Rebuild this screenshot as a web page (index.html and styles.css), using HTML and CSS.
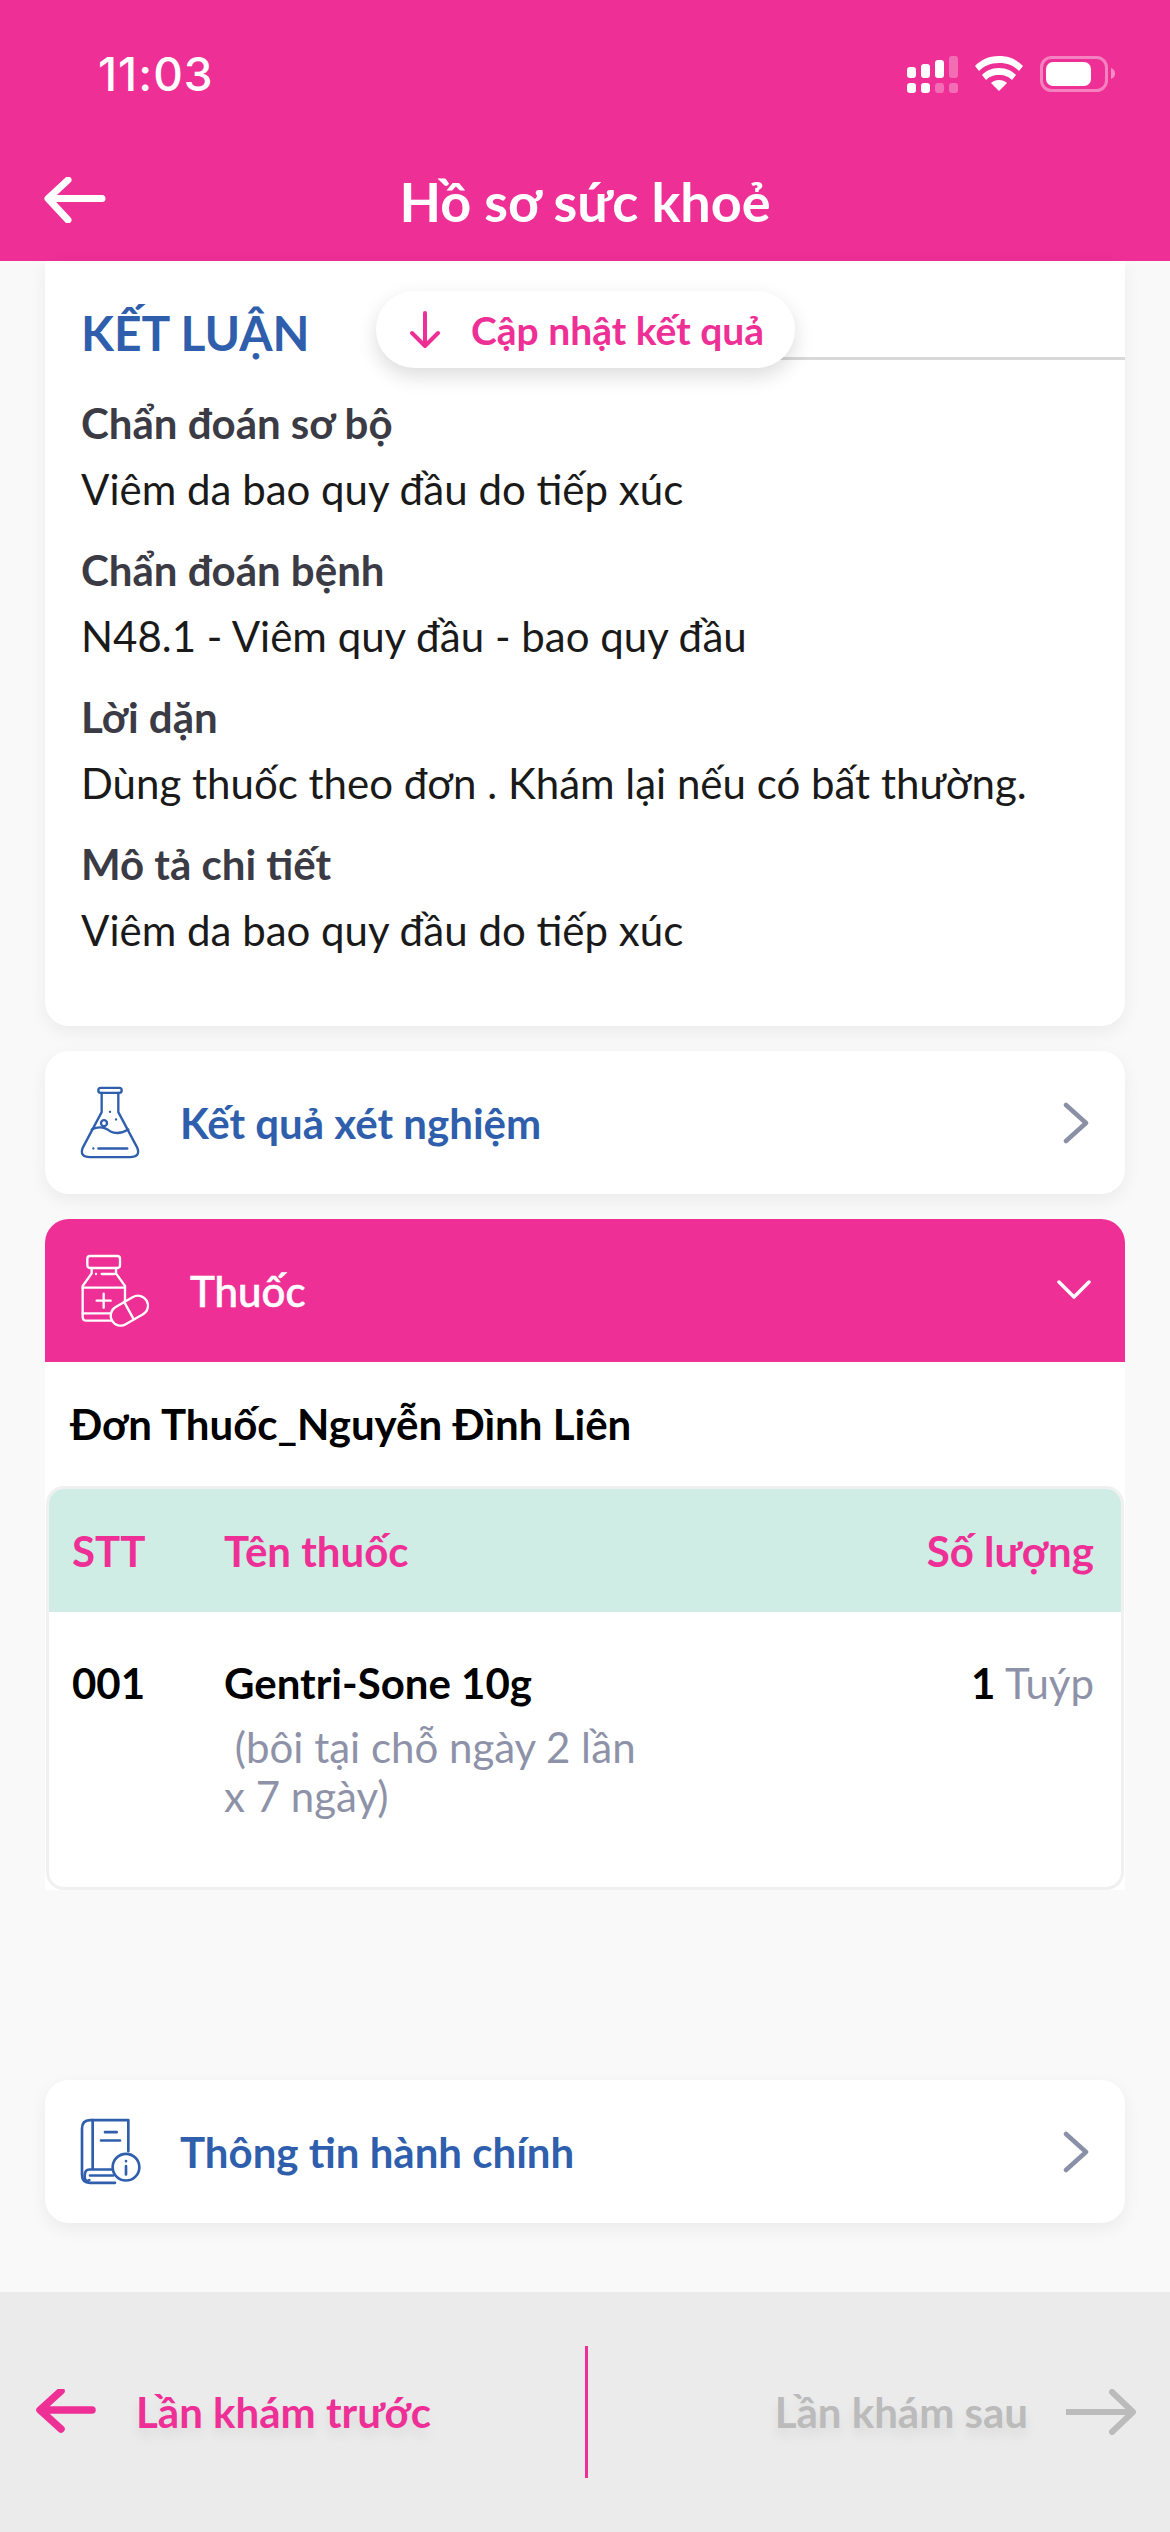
FILE: index.html
```html
<!DOCTYPE html>
<html lang="vi">
<head>
    <meta charset="UTF-8">
    <meta name="viewport" content="width=device-width, initial-scale=1.0">
    <title>Hồ sơ sức khoẻ</title>
    <link rel="stylesheet" href="styles.css">
</head>
<body>

<div class="screen">

    <!-- Header -->
    <header class="topbar">
        <div class="status">
            <span class="clock">11:03</span>
            <svg class="status-icons" viewBox="907 56 208 37" width="208" height="37">
                <g fill="#fff">
                    <rect x="907" y="67" width="9" height="11" rx="3"/>
                    <rect x="921" y="64" width="9" height="14" rx="3"/>
                    <rect x="935" y="60" width="9" height="18" rx="3"/>
                    <rect x="907" y="83" width="9" height="10" rx="3"/>
                    <rect x="921" y="83" width="9" height="10" rx="3"/>
                    <rect x="949" y="56" width="9" height="22" rx="3" opacity=".3"/>
                    <rect x="935" y="83" width="9" height="10" rx="3" opacity=".3"/>
                    <rect x="949" y="83" width="9" height="10" rx="3" opacity=".3"/>
                    <path d="M999 91l-8-8c4-4 12-4 16 0z"/>
                    <path d="M999 68c-8 0-13 3-17 7l4 5c3-3 7-5 13-5s10 2 13 5l4-5c-4-4-9-7-17-7z"/>
                    <path d="M999 56c-11 0-18 4-24 10l4 5c5-5 11-8 20-8s15 3 20 8l4-5c-6-6-13-10-24-10z"/>
                    <rect x="1046" y="62" width="45" height="24" rx="7"/>
                    <path d="M1111 68c3 1 4 3 4 5.500s-1 4.500-4 5.500z" opacity=".45"/>
                </g>
                <rect x="1041.500" y="57.500" width="65" height="33" rx="10" fill="none" stroke="#fff" stroke-width="3" opacity=".4"/>
            </svg>
        </div>
        <div class="nav">
            <svg class="nav-back" viewBox="0 0 64 46" width="64" height="46">
                <path d="M58 21.500H5M24 3L4 21.500 24 43" fill="none" stroke="#fff" stroke-width="7" stroke-linecap="round" stroke-linejoin="round"/>
            </svg>
            <h1 class="nav-title">Hồ sơ sức khoẻ</h1>
        </div>
    </header>

    <main class="content">

        <!-- Conclusion -->
        <section class="card conclusion">
            <div class="conclusion-head">
                <h2 class="conclusion-title">KẾT LUẬN</h2>
                <div class="update-pill">
                    <svg viewBox="0 0 30 38" width="30" height="38">
                        <path d="M15 2V35M2 22L15 35 28 22" fill="none" stroke="#ee2f96" stroke-width="4" stroke-linecap="round" stroke-linejoin="round"/>
                    </svg>
                    <span>Cập nhật kết quả</span>
                </div>
                <div class="conclusion-line"></div>
            </div>
            <div class="info-label">Chẩn đoán sơ bộ</div>
            <div class="info-value">Viêm da bao quy đầu do tiếp xúc</div>
            <div class="info-label">Chẩn đoán bệnh</div>
            <div class="info-value">N48.1 - Viêm quy đầu - bao quy đầu</div>
            <div class="info-label">Lời dặn</div>
            <div class="info-value">Dùng thuốc theo đơn . Khám lại nếu có bất thường.</div>
            <div class="info-label">Mô tả chi tiết</div>
            <div class="info-value">Viêm da bao quy đầu do tiếp xúc</div>
        </section>

        <!-- Lab results -->
        <section class="card link-row">
            <svg class="link-icon" viewBox="120 170 180 218" width="60" height="73">
                <g fill="none" stroke="#2f5fac" stroke-width="7" stroke-linecap="round" stroke-linejoin="round">
                    <rect x="175" y="175" width="70" height="15" rx="7"/>
                    <path d="M185 190V248L128 355Q118 383 150 383H270Q302 383 292 355L235 248V190"/>
                    <path d="M155 300Q185 285 210 305 235 318 265 300"/>
                    <circle cx="192" cy="281" r="9"/>
                    <path d="M175 357H262M160 357h.1M210 247h.1M228 270h.1"/>
                </g>
            </svg>
            <span class="link-text">Kết quả xét nghiệm</span>
            <svg class="link-chevron" viewBox="0 0 28 42" width="28" height="42">
                <path d="M4 3L24 21 4 39" fill="none" stroke="#8a90a6" stroke-width="4.500" stroke-linecap="round" stroke-linejoin="round"/>
            </svg>
        </section>

        <!-- Medicine -->
        <section class="medicine">
            <div class="medicine-head">
                <svg class="medicine-icon" viewBox="120 672 210 222" width="70" height="74">
                    <g fill="none" stroke="#fff" stroke-width="7" stroke-linecap="round" stroke-linejoin="round">
                        <rect x="142" y="678" width="98" height="36" rx="8"/>
                        <path d="M155 714V730L128 768V860Q128 872 140 872H215M228 714V730L255 768V815"/>
                        <path d="M128 773H255M128 850H210M170 812H212M191 791V833"/>
                        <path d="M168 732h.1M185 732H225"/>
                        <rect x="208" y="812" width="120" height="60" rx="30" transform="rotate(-30 268 842)"/>
                        <path d="M252 815L280 866"/>
                    </g>
                </svg>
                <span class="medicine-title">Thuốc</span>
                <svg class="medicine-chevron" viewBox="0 0 36 20" width="36" height="20">
                    <path d="M4 2L19 17 34 2" fill="none" stroke="#fff" stroke-width="3.500" stroke-linecap="round" stroke-linejoin="round"/>
                </svg>
            </div>
            <div class="medicine-body">
                <div class="rx-name">Đơn Thuốc_Nguyễn Đình Liên</div>
                <div class="rx-table">
                    <div class="rx-row rx-row-head">
                        <span>STT</span>
                        <span>Tên thuốc</span>
                        <span class="rx-qty">Số lượng</span>
                    </div>
                    <div class="rx-row rx-row-item">
                        <span class="rx-strong">001</span>
                        <div>
                            <div class="rx-strong">Gentri-Sone 10g</div>
                            <div class="rx-note">&nbsp;(bôi tại chỗ ngày 2 lần<br>x 7 ngày)</div>
                        </div>
                        <span class="rx-qty rx-unit"><span class="rx-strong">1</span> Tuýp</span>
                    </div>
                </div>
            </div>
        </section>

        <!-- Admin info -->
        <section class="card link-row admin-row">
            <svg class="link-icon" viewBox="120 86 186 200" width="62" height="67">
                <g fill="none" stroke="#2f5fac" stroke-width="8" stroke-linecap="round" stroke-linejoin="round">
                    <path d="M265 185V92H150Q126 92 126 118V255Q126 280 150 280H225"/>
                    <path d="M158 92V240H148Q134 240 134 260T148 272M150 258H220M158 240H215"/>
                    <path d="M195 128H230M183 153H240"/>
                    <circle cx="258" cy="233" r="40"/>
                    <path d="M258 215h.1M258 230V255"/>
                </g>
            </svg>
            <span class="link-text">Thông tin hành chính</span>
            <svg class="link-chevron" viewBox="0 0 28 42" width="28" height="42">
                <path d="M4 3L24 21 4 39" fill="none" stroke="#8a90a6" stroke-width="4.500" stroke-linecap="round" stroke-linejoin="round"/>
            </svg>
        </section>
    </main>

    <!-- Previous / next visit -->
    <footer class="visit-bar">
        <div class="visit visit-prev">
            <svg viewBox="0 0 64 46" width="64" height="46">
                <path d="M56 21H5M25 2L4 21 25 40" fill="none" stroke="#ee2f96" stroke-width="7.500" stroke-linecap="round" stroke-linejoin="round"/>
            </svg>
            <span>Lần khám trước</span>
        </div>
        <div class="visit-divider"></div>
        <div class="visit visit-next">
            <span>Lần khám sau</span>
            <svg viewBox="0 0 72 46" width="72" height="46">
                <path d="M1 23H66" fill="none" stroke="#bbb" stroke-width="6"/>
                <path d="M47 3L68 23 47 43" fill="none" stroke="#bbb" stroke-width="6" stroke-linejoin="round" stroke-linecap="round"/>
            </svg>
        </div>
    </footer>
</div>

</body>
</html>
```

FILE: styles.css
```css
/* Global Styles */
* {
    box-sizing: border-box;
}

body {
    margin: 0;
    font-family: 'Lato', 'Noto Sans', sans-serif;
    background: #f9f9f9;
}

.screen {
    width: 1170px;
    height: 2532px;
    display: flex;
    flex-direction: column;
    overflow: hidden;
}

/* Header */
.topbar {
    height: 261px;
    background: #ee2f96;
    color: #fff;
    flex-shrink: 0;
}

.status {
    height: 146px;
    padding: 50px 55px 0 98px;
    display: flex;
    justify-content: space-between;
    align-items: flex-start;
}

.clock {
    font-family: 'Inter', sans-serif;
    font-size: 46px;
    font-weight: 500;
    line-height: 48px;
    letter-spacing: 1px;
}

.status-icons {
    margin-top: 6px;
}

.nav {
    display: flex;
    align-items: center;
    height: 110px;
    padding-left: 44px;
}

.nav-back {
    margin-top: -2px;
}

.nav-title {
    flex: 1;
    margin: 0 108px 0 0;
    text-align: center;
    font-size: 54px;
    font-weight: 700;
}

/* Content */
.content {
    flex: 1;
    padding: 0 45px;
}

.card {
    background: #fff;
    border-radius: 0 0 24px 24px;
    box-shadow: 0 6px 18px rgba(0, 0, 0, 0.06);
}

.conclusion {
    padding: 30px 0 63px 36px;
}

.conclusion-head {
    display: flex;
    align-items: center;
    height: 77px;
    margin-bottom: 22px;
}

.conclusion-title {
    margin: 5px 0 0;
    width: 295px;
    flex-shrink: 0;
    font-size: 48px;
    font-weight: 700;
    color: #2f5fac;
}

.update-pill {
    position: relative;
    z-index: 1;
    display: flex;
    align-items: center;
    gap: 31px;
    height: 77px;
    width: 419px;
    flex-shrink: 0;
    padding-left: 34px;
    background: #fff;
    border-radius: 38px;
    box-shadow: 0 8px 20px rgba(0, 0, 0, 0.14);
    font-size: 39px;
    font-weight: 700;
    color: #ee2f96;
}

.conclusion-line {
    flex: 1;
    align-self: flex-end;
    height: 3px;
    margin: 0 0 8px -20px;
    background: #d8d8d8;
}

.info-label {
    font-size: 42px;
    font-weight: 700;
    line-height: 66px;
    color: #3b3b45;
}

.info-value {
    font-size: 42px;
    line-height: 66px;
    margin-bottom: 15px;
    color: #1a1a1a;
}

.info-value:last-child {
    margin-bottom: 0;
}

/* Link rows */
.link-row {
    display: flex;
    align-items: center;
    height: 143px;
    margin-top: 25px;
    padding: 0 35px;
    border-radius: 24px;
}

.link-icon {
    flex-shrink: 0;
}

.link-text {
    flex: 1;
    margin-left: 40px;
    font-size: 42px;
    font-weight: 700;
    color: #2f5fac;
}

.admin-row {
    margin-top: 190px;
}

.admin-row .link-text {
    margin-left: 38px;
}

/* Medicine */
.medicine {
    margin-top: 25px;
}

.medicine-head {
    display: flex;
    align-items: center;
    height: 143px;
    padding: 0 34px 0 35px;
    background: #ee2f96;
    border-radius: 24px 24px 0 0;
    color: #fff;
}

.medicine-title {
    flex: 1;
    margin-left: 40px;
    font-size: 42px;
    font-weight: 500;
    -webkit-text-stroke: 0.6px #fff;
}

.medicine-chevron {
    margin-top: -1px;
}

.medicine-body {
    background: #fff;
}

.rx-name {
    height: 124px;
    padding-left: 25px;
    font-size: 42px;
    font-weight: 700;
    line-height: 124px;
    color: #000;
}

.rx-table {
    margin: 0 1px;
    border: 3px solid #f0f0f0;
    border-radius: 18px;
    overflow: hidden;
}

.rx-row {
    display: grid;
    grid-template-columns: 152px 1fr auto;
    padding: 0 27px 0 23px;
    font-size: 42px;
}

.rx-row-head {
    height: 123px;
    align-items: center;
    background: #cfede4;
    font-weight: 700;
    color: #ee2f96;
}

.rx-row-item {
    height: 275px;
    padding-top: 46px;
    line-height: 50px;
}

.rx-qty {
    text-align: right;
}

.rx-strong {
    font-weight: 700;
    color: #000;
}

.rx-note {
    margin-top: 15px;
    font-size: 42px;
    line-height: 49px;
    color: #8e92a8;
}

.rx-unit {
    color: #8e92a8;
}

/* Footer */
.visit-bar {
    height: 240px;
    flex-shrink: 0;
    display: flex;
    align-items: center;
    background: #ebebeb;
}

.visit {
    flex: 1;
    display: flex;
    align-items: center;
    font-size: 42px;
    font-weight: 700;
    text-shadow: 0 8px 12px rgba(0, 0, 0, 0.08);
}

.visit-prev {
    padding-left: 36px;
    gap: 36px;
    color: #ee2f96;
}

.visit-next {
    justify-content: flex-end;
    padding-right: 33px;
    gap: 37px;
    color: #bbb;
}

.visit-divider {
    width: 3px;
    height: 132px;
    background: #ee2f96;
}
```
